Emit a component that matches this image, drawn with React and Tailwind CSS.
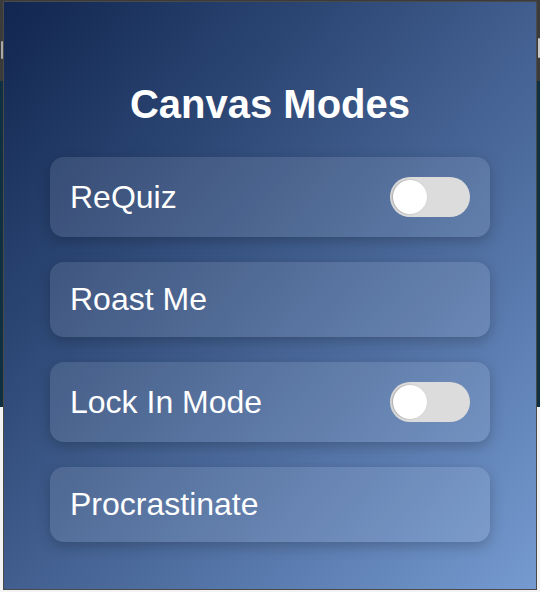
import { useState } from "react";

const modes = [
  { name: "ReQuiz", toggle: true },
  { name: "Roast Me", toggle: false },
  { name: "Lock In Mode", toggle: true },
  { name: "Procrastinate", toggle: false },
];

function Toggle({ on, onClick }) {
  return (
    <button
      onClick={onClick}
      className={`relative w-[80px] h-[40px] rounded-full shrink-0 transition ${on ? "bg-[#4ade80]" : "bg-[#dcdcdc]"}`}
    >
      <span
        className={`absolute top-[3px] w-[34px] h-[34px] rounded-full bg-white shadow-[-1px_0_2px_rgba(0,0,0,0.25)] transition-all ${on ? "left-[43px]" : "left-[3px]"}`}
      />
    </button>
  );
}

export default function App() {
  const [state, setState] = useState({ ReQuiz: false, "Lock In Mode": false });

  return (
    <div className="relative w-[540px] h-[592px] overflow-hidden font-['Liberation_Sans',Arial,sans-serif]">
      {/* page behind the popup */}
      <div className="flex flex-col h-full">
        <div className="h-[81px] bg-[#3b3b3b] relative">
          <div className="absolute left-[1px] top-[41px] w-[2px] h-[18px] bg-[#a8a8a8] rounded" />
          <div className="absolute right-[0px] top-[38px] w-[2px] h-[20px] bg-[#c8c8c8] rounded" />
        </div>
        <div className="h-[326px] bg-[#0f3041]" />
        <div className="flex-1 bg-[#f3f3f3]" />
      </div>

      {/* popup */}
      <div className="absolute left-[3px] top-[1px] w-[534px] h-[589px] border border-[#4a4a4a] bg-linear-to-br from-[#112650] to-[#769bd1] flex flex-col items-center pt-[79px]">
        <h1 className="text-[40px] leading-[46px] font-bold text-white">Canvas Modes</h1>

        <div className="mt-[30px] w-[440px] flex flex-col gap-[25px]">
          {modes.map((m) => (
            <div
              key={m.name}
              className="flex items-center justify-between bg-white/10 rounded-[14px] px-[20px] py-[20px] shadow-[0_4px_14px_rgba(0,0,0,0.22)]"
            >
              <span className="text-[32px] leading-[35px] text-white">{m.name}</span>
              {m.toggle && (
                <Toggle
                  on={state[m.name]}
                  onClick={() => setState({ ...state, [m.name]: !state[m.name] })}
                />
              )}
            </div>
          ))}
        </div>
      </div>
    </div>
  );
}
